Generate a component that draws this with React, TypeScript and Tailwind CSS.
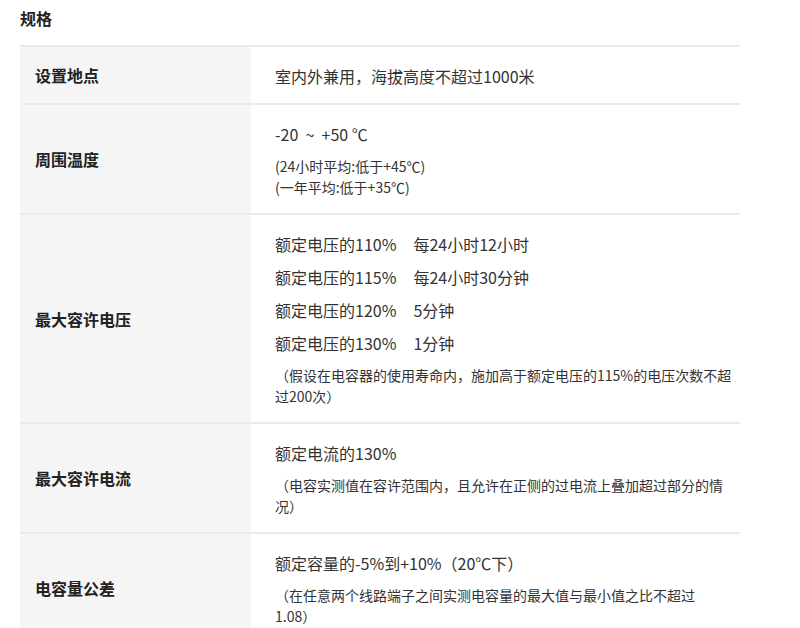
import type { ReactNode } from "react";

interface SpecRow {
  label: string;
  lines: ReactNode[];
  notes?: ReactNode[];
}

const rows: SpecRow[] = [
  {
    label: "设置地点",
    lines: ["室内外兼用，海拔高度不超过1000米"],
  },
  {
    label: "周围温度",
    lines: ["-20\u00a0 ~ \u00a0+50 ℃"],
    notes: ["(24小时平均:低于+45℃)", "(一年平均:低于+35℃)"],
  },
  {
    label: "最大容许电压",
    lines: [
      <>额定电压的110%<span className="ml-[17px]">每24小时12小时</span></>,
      <>额定电压的115%<span className="ml-[17px]">每24小时30分钟</span></>,
      <>额定电压的120%<span className="ml-[17px]">5分钟</span></>,
      <>额定电压的130%<span className="ml-[17px]">1分钟</span></>,
    ],
    notes: ["（假设在电容器的使用寿命内，施加高于额定电压的115%的电压次数不超", "过200次）"],
  },
  {
    label: "最大容许电流",
    lines: ["额定电流的130%"],
    notes: ["（电容实测值在容许范围内，且允许在正侧的过电流上叠加超过部分的情", "况）"],
  },
  {
    label: "电容量公差",
    lines: ["额定容量的-5%到+10%（20℃下）"],
    notes: ["（在任意两个线路端子之间实测电容量的最大值与最小值之比不超过", "1.08）"],
  },
];

export default function App() {
  return (
    <div className="min-h-[628px] bg-white px-5 pt-[6px] font-['Noto_Sans_CJK_SC','Noto_Sans',sans-serif]">
      <h2 className="mb-[15px] text-[16px] leading-[24px] font-bold text-[#222]">规格</h2>
      <div className="w-[720px]">
        {rows.map((row) => (
          <div
            key={row.label}
            className="grid grid-cols-[231px_489px] border-t-2 border-[#ebebeb]"
          >
            <div className="flex items-center bg-[#f5f5f5] pl-[15px] text-[16px] font-bold text-[#222]">
              {row.label}
            </div>
            <div className="pt-[17px] pb-[15px] pl-6 pr-[10px] text-[#333]">
              <div className="flex flex-col gap-[9px] text-[16px] leading-[24px]">
                {row.lines.map((line, i) => (
                  <p key={i}>{line}</p>
                ))}
              </div>
              {row.notes && (
                <div className="mt-[10px] text-[14px] leading-[21px]">
                  {row.notes.map((note, i) => (
                    <p key={i} className="whitespace-nowrap">
                      {note}
                    </p>
                  ))}
                </div>
              )}
            </div>
          </div>
        ))}
      </div>
    </div>
  );
}
